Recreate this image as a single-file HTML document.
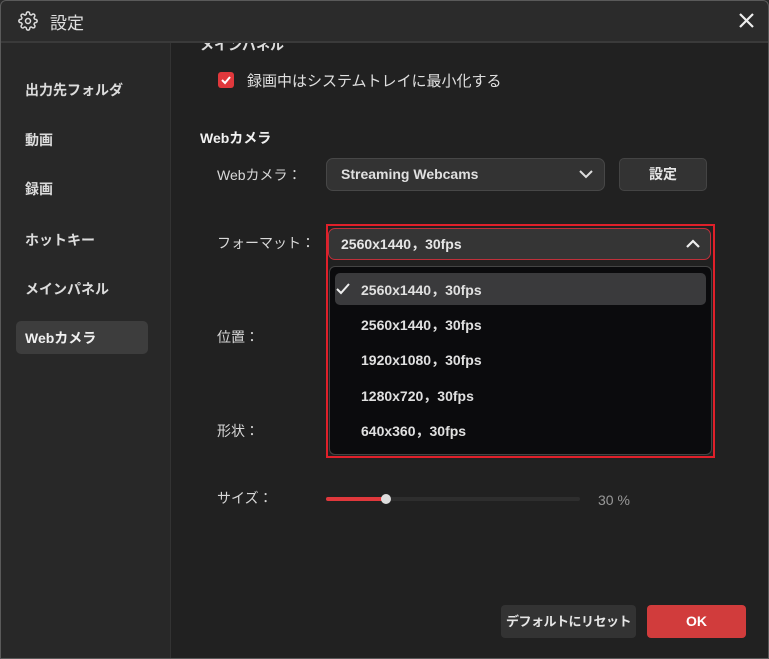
<!DOCTYPE html>
<html><head><meta charset="utf-8"><style>
*{margin:0;padding:0;box-sizing:border-box}
body{width:769px;height:659px;background:#212121;font-family:"Liberation Sans","Noto Sans CJK JP",sans-serif;color:#e6e6e6;position:relative;overflow:hidden}
.win{position:absolute;left:0;top:0;width:769px;height:659px;overflow:hidden;background:#212121}
.bd{position:absolute;left:0;top:0;width:769px;height:659px;border:1px solid #5a5a5a;border-radius:6px 6px 0 0;z-index:9;pointer-events:none}
.title{position:absolute;left:0;top:0;width:769px;height:43px;background:#2b2b2b;border-bottom:2px solid #3a3a3a;z-index:3}
.side{position:absolute;left:0;top:43px;width:171px;height:616px;background:#282828;border-right:1px solid #333}
.a{position:absolute;white-space:nowrap}
.si{position:absolute;left:25px;font-size:14px;font-weight:bold;color:#dcdcdc;transform:translateY(-50%)}
.lbl{position:absolute;left:217px;font-size:14px;color:#d8d8d8;transform:translateY(-50%)}
.it{position:absolute;left:361px;font-size:14px;font-weight:bold;color:#e0e0e0;transform:translateY(-50%)}
</style></head><body><div class="win">
<div class="title">
<svg class="a" style="left:18px;top:11px" width="20" height="20" viewBox="0 0 24 24" fill="none" stroke="#ddd" stroke-width="1.8"><circle cx="12" cy="12" r="3"/><path d="M19.4 15a1.65 1.65 0 0 0 .33 1.82l.06.06a2 2 0 1 1-2.83 2.83l-.06-.06a1.65 1.65 0 0 0-1.820-.33 1.65 1.65 0 0 0-1 1.51V21a2 2 0 1 1-4 0v-.09A1.65 1.65 0 0 0 9 19.4a1.65 1.65 0 0 0-1.82.33l-.06.06a2 2 0 1 1-2.83-2.83l.06-.06A1.65 1.65 0 0 0 4.68 15a1.65 1.65 0 0 0-1.51-1H3a2 2 0 1 1 0-4h.09A1.65 1.65 0 0 0 4.6 9a1.65 1.65 0 0 0-.33-1.82l-.06-.06a2 2 0 1 1 2.83-2.83l.06.06A1.65 1.65 0 0 0 9 4.68a1.65 1.65 0 0 0 1-1.51V3a2 2 0 1 1 4 0v.09a1.65 1.65 0 0 0 1 1.51 1.65 1.65 0 0 0 1.82-.33l.06-.06a2 2 0 1 1 2.83 2.83l-.06.06A1.65 1.65 0 0 0 19.4 9a1.65 1.65 0 0 0 1.51 1H21a2 2 0 1 1 0 4h-.09a1.65 1.65 0 0 0-1.51 1z"/></svg>
<div class="a" style="left:50px;top:9px;font-size:17px;color:#e0e0e0">設定</div>
<svg class="a" style="left:739px;top:13px" width="15" height="15" viewBox="0 0 15 15" stroke="#eee" stroke-width="2.2"><path d="M1 1L14 14M14 1L1 14"/></svg>
</div>
<div class="side">
<div class="si" style="top:47px">出力先フォルダ</div>
<div class="si" style="top:97px">動画</div>
<div class="si" style="top:146px">録画</div>
<div class="si" style="top:197px">ホットキー</div>
<div class="si" style="top:246px">メインパネル</div>
<div class="a" style="left:16px;top:278px;width:132px;height:33px;background:#3d3d3d;border-radius:5px"></div>
<div class="si" style="top:295px;color:#f0f0f0">Webカメラ</div>
</div>
<div class="a" style="left:200px;top:35px;font-size:14px;font-weight:bold;color:#ddd">メインパネル</div>
<div class="a" style="left:218px;top:72px;width:16px;height:16px;background:#e0383c;border-radius:3px"></div>
<svg class="a" style="left:218px;top:72px" width="16" height="16" viewBox="0 0 16 16" fill="none" stroke="#fff" stroke-width="2"><path d="M4 8l3 3 5-6"/></svg>
<div class="a" style="left:247px;top:70px;font-size:15px;color:#e0e0e0">録画中はシステムトレイに最小化する</div>
<div class="a" style="left:200px;top:128px;font-size:14px;font-weight:bold;color:#f0f0f0">Webカメラ</div>
<div class="lbl" style="top:175px">Webカメラ：</div>
<div class="a" style="left:326px;top:158px;width:279px;height:33px;background:#333;border:1px solid #474747;border-radius:7px"></div>
<div class="a" style="left:341px;top:166px;font-size:14px;font-weight:bold;color:#e0e0e0">Streaming Webcams</div>
<svg class="a" style="left:579px;top:169px" width="14" height="10" viewBox="0 0 14 10" fill="none" stroke="#ddd" stroke-width="2"><path d="M1 2l6 6 6-6"/></svg>
<div class="a" style="left:619px;top:158px;width:88px;height:33px;background:#333;border:1px solid #444;border-radius:5px;text-align:center;line-height:31px;font-size:14px;font-weight:bold;color:#e6e6e6">設定</div>
<div class="lbl" style="top:243px">フォーマット：</div>
<div class="a" style="left:326px;top:224px;width:389px;height:234px;border:2px solid #e0202a"></div>
<div class="a" style="left:328px;top:228px;width:383px;height:32px;background:#353535;border:1px solid #c0303a;border-radius:7px"></div>
<div class="a" style="left:341px;top:234px;font-size:14px;font-weight:bold;color:#e6e6e6">2560x1440，30fps</div>
<svg class="a" style="left:686px;top:239px" width="14" height="10" viewBox="0 0 14 10" fill="none" stroke="#eee" stroke-width="2.2"><path d="M1 8l6-6 6 6"/></svg>
<div class="a" style="left:329px;top:266px;width:383px;height:189px;background:#0b0b0d;border:1px solid #444;border-radius:6px"></div>
<div class="a" style="left:335px;top:273px;width:371px;height:32px;background:#3a3a3c;border-radius:5px"></div>
<svg class="a" style="left:336px;top:283px" width="14" height="12" viewBox="0 0 14 12" fill="none" stroke="#eee" stroke-width="2"><path d="M1 6l4 4 8-9"/></svg>
<div class="it" style="top:290px">2560x1440，30fps</div>
<div class="it" style="top:325px">2560x1440，30fps</div>
<div class="it" style="top:360px">1920x1080，30fps</div>
<div class="it" style="top:396px">1280x720，30fps</div>
<div class="it" style="top:431px">640x360，30fps</div>
<div class="lbl" style="top:337px">位置：</div>
<div class="lbl" style="top:431px">形状：</div>
<div class="lbl" style="top:498px">サイズ：</div>
<div class="a" style="left:326px;top:497px;width:254px;height:4px;background:#2e2e2e;border-radius:2px"></div>
<div class="a" style="left:326px;top:497px;width:60px;height:4px;background:#e0383c;border-radius:2px"></div>
<div class="a" style="left:381px;top:494px;width:10px;height:10px;background:#ddd;border-radius:50%"></div>
<div class="a" style="left:598px;top:492px;font-size:14px;color:#999">30 %</div>
<div class="a" style="left:501px;top:605px;width:135px;height:33px;background:#333;border-radius:4px;text-align:center;line-height:33px;font-size:13px;font-weight:bold;color:#e6e6e6;letter-spacing:-0.5px">デフォルトにリセット</div>
<div class="a" style="left:647px;top:605px;width:99px;height:33px;background:#d13c3c;border-radius:4px;text-align:center;line-height:33px;font-size:14px;font-weight:bold;color:#fff">OK</div>
</div><div class="bd"></div></body></html>
